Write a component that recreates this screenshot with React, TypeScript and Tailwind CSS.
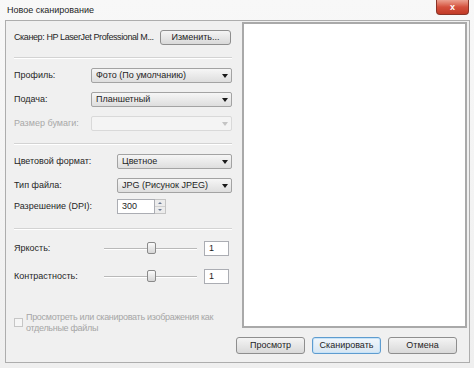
import React from 'react'

const FONT = { fontFamily: '"Liberation Sans", Arial, sans-serif' }

function Arrow({ light }: { light?: boolean }) {
  return (
    <svg width="6" height="4" viewBox="0 0 6 4" className="shrink-0">
      <path d="M0 0H6L3 4Z" fill={light ? '#c4c4c4' : '#1a1a1a'} />
    </svg>
  )
}

function Select({ value, w, disabled }: { value?: string; w: string; disabled?: boolean }) {
  return (
    <div
      className={
        'h-[15px] rounded-[2px] border flex items-center pl-[4px] pr-[3px] ' +
        w +
        (disabled
          ? ' border-[#d9d9d9] bg-[#f4f4f4]'
          : ' border-[#a3a3a3] bg-gradient-to-b from-[#f6f6f6] to-[#dedede]')
      }
    >
      <span className="flex-1 text-[9px] leading-none text-[#1e1e1e] truncate">{value}</span>
      <Arrow light={disabled} />
    </div>
  )
}

function Row({ label, labelW, children, disabled }: { label: string; labelW: string; children: React.ReactNode; disabled?: boolean }) {
  return (
    <div className="flex items-center h-[15px]">
      <span className={'text-[9px] leading-none ' + labelW + (disabled ? ' text-[#a8a8a8]' : ' text-[#262626]')}>{label}</span>
      {children}
    </div>
  )
}

function Sep() {
  return <div className="h-[2px] w-[218px] border-t border-[#d3d3d3] border-b border-b-white" />
}

function Slider({ value }: { value: string }) {
  return (
    <div className="flex items-center h-[15px]">
      <div className="w-[90px]" />
      <div className="relative w-[93px] h-[2px] bg-[#b9b9b9] border-b border-white">
        <div className="absolute left-[43px] top-[-6px] w-[9px] h-[12px] rounded-[2px] border border-[#8a8a8a] bg-gradient-to-b from-[#fbfbfb] to-[#d6d6d6]" />
      </div>
      <div className="ml-[7px] w-[25px] h-[15px] bg-white border border-[#abadb3] flex items-center pl-[4px] text-[9px] leading-none text-[#1e1e1e]">
        {value}
      </div>
    </div>
  )
}

function Btn({ children, def }: { children: React.ReactNode; def?: boolean }) {
  return (
    <div
      className={
        'w-[69px] h-[17px] rounded-[3px] border flex items-center justify-center text-[9px] leading-none text-[#1e1e1e] ' +
        (def
          ? 'border-[#5e9ccf] bg-gradient-to-b from-[#f1f7fc] to-[#d7e6f2] shadow-[inset_0_0_0_1px_#c7e3f8]'
          : 'border-[#8e8e8e] bg-gradient-to-b from-[#f4f4f4] to-[#d9d9d9]')
      }
    >
      {children}
    </div>
  )
}

export default function App() {
  return (
    <div className="w-[474px] h-[368px] overflow-hidden bg-gradient-to-b from-[#f8f8f8] to-[#efefef] select-none" style={FONT}>
      {/* title bar */}
      <div className="h-[20px] flex items-start">
        <span className="ml-[7px] mt-[6px] text-[9px] leading-none text-[#1e1e1e]">Новое сканирование</span>
        <div className="ml-auto mr-[5px] w-[33px] h-[15px] rounded-b-[4px] border border-t-0 border-[#8a3427] bg-gradient-to-b from-[#eba090] via-[#d4503d] to-[#c23a26] flex items-center justify-center">
          <span className="text-[9px] leading-none font-bold text-white">x</span>
        </div>
      </div>

      {/* dialog frame */}
      <div className="ml-[5px] w-[465px] h-[343px] border border-[#adadad] bg-[#f0f0f0] flex flex-col">
        <div className="flex h-[307px]">
          {/* settings */}
          <div className="w-[236px] pl-[8px] flex flex-col">
            <div className="mt-[9px] flex items-center h-[15px]">
              <span className="w-[146px] text-[9px] leading-none text-[#262626] tracking-[-0.4px] whitespace-nowrap">
                Сканер: HP LaserJet Professional M...
              </span>
              <div className="w-[71px] h-[15px] rounded-[3px] border border-[#8e8e8e] bg-gradient-to-b from-[#f4f4f4] to-[#d9d9d9] flex items-center justify-center text-[9px] leading-none text-[#1e1e1e]">
                Изменить...
              </div>
            </div>
            <div className="mt-[12px]"><Sep /></div>

            <div className="mt-[9px]">
              <Row label="Профиль:" labelW="w-[77px]"><Select value="Фото (По умолчанию)" w="w-[141px]" /></Row>
            </div>
            <div className="mt-[9px]">
              <Row label="Подача:" labelW="w-[77px]"><Select value="Планшетный" w="w-[141px]" /></Row>
            </div>
            <div className="mt-[9px]">
              <Row label="Размер бумаги:" labelW="w-[77px]" disabled><Select w="w-[141px]" disabled /></Row>
            </div>
            <div className="mt-[12px]"><Sep /></div>

            <div className="mt-[9px]">
              <Row label="Цветовой формат:" labelW="w-[103px]"><Select value="Цветное" w="w-[115px]" /></Row>
            </div>
            <div className="mt-[9px]">
              <Row label="Тип файла:" labelW="w-[103px]"><Select value="JPG (Рисунок JPEG)" w="w-[115px]" /></Row>
            </div>
            <div className="mt-[6px]">
              <Row label="Разрешение (DPI):" labelW="w-[103px]">
                <div className="flex h-[15px]">
                  <div className="w-[38px] h-[15px] bg-white border border-[#abadb3] flex items-center pl-[4px] text-[9px] leading-none text-[#1e1e1e]">
                    300
                  </div>
                  <div className="w-[11px] h-[15px] flex flex-col border border-l-0 border-[#c4c4c4] bg-[#ececec]">
                    <div className="flex-1 flex items-center justify-center border-b border-[#d0d0d0]">
                      <svg width="4" height="2" viewBox="0 0 4 2"><path d="M0 2H4L2 0Z" fill="#6a7a95" /></svg>
                    </div>
                    <div className="flex-1 flex items-center justify-center">
                      <svg width="4" height="2" viewBox="0 0 4 2"><path d="M0 0H4L2 2Z" fill="#6a7a95" /></svg>
                    </div>
                  </div>
                </div>
              </Row>
            </div>
            <div className="mt-[14px]"><Sep /></div>

            <div className="mt-[11px] relative">
              <span className="absolute left-0 top-[3px] text-[9px] leading-none text-[#262626]">Яркость:</span>
              <Slider value="1" />
            </div>
            <div className="mt-[13px] relative">
              <span className="absolute left-0 top-[3px] text-[9px] leading-none text-[#262626]">Контрастность:</span>
              <Slider value="1" />
            </div>

            <div className="mt-[28px] flex items-start">
              <div className="mt-[6px] w-[9px] h-[9px] border border-[#c6c6c6] bg-[#f6f6f6] shrink-0" />
              <span className="ml-[3px] text-[9px] leading-[11px] text-[#a6a6a6] tracking-[-0.3px]">
                Просмотреть или сканировать изображения как
                <br />
                отдельные файлы
              </span>
            </div>
          </div>

          {/* preview */}
          <div className="mt-[1px] w-[225px] h-[306px] bg-white border-2 border-[#a9a9a9]" />
        </div>

        <div className="mt-[9px] flex justify-end gap-[7px] pr-[12px]">
          <Btn>Просмотр</Btn>
          <Btn def>Сканировать</Btn>
          <Btn>Отмена</Btn>
        </div>
      </div>
    </div>
  )
}
